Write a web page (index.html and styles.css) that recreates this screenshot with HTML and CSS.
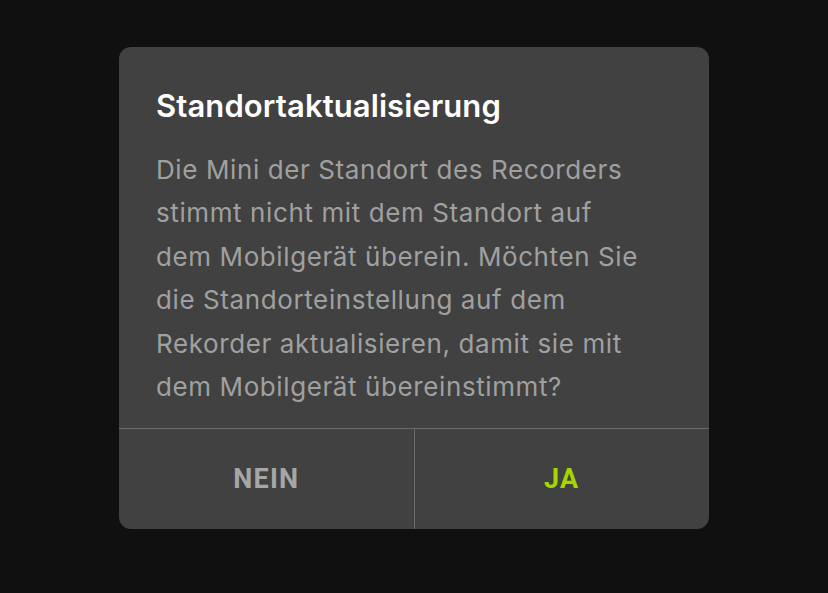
FILE: index.html
```html
<!DOCTYPE html>
<html lang="de">
<head>
  <meta charset="UTF-8">
  <title>Standortaktualisierung</title>
  <meta name="viewport" content="width=device-width, initial-scale=1.0">
  <link rel="stylesheet" href="styles.css">
</head>
<body>
  <div class="dialog" role="dialog" aria-labelledby="dlgTitle">
    <div class="dialog-body">
      <h2 id="dlgTitle">Standortaktualisierung</h2>
      <p class="message">Die Mini der Standort des Recorders<br>
        stimmt nicht mit dem Standort auf<br>
        dem Mobilgerät überein. Möchten Sie<br>
        die Standorteinstellung auf dem<br>
        Rekorder aktualisieren, damit sie mit<br>
        dem Mobilgerät übereinstimmt?</p>
    </div>
    <div class="actions">
      <button class="btn btn-no">NEIN</button>
      <button class="btn btn-yes">JA</button>
    </div>
  </div>
</body>
</html>
```

FILE: styles.css
```css
html, body {
  margin: 0;
  padding: 0;
  height: 100%;
}
body {
  background: #101010;
  font-family: Inter, 'Noto Sans', sans-serif;
  display: flex;
  justify-content: center;
  align-items: flex-start;
  padding-top: 47px;
  box-sizing: border-box;
  overflow: hidden;
}

.dialog {
  width: 590px;
  background: #414141;
  border-radius: 12px;
  overflow: hidden;
}

.dialog-body {
  padding: 40px 20px 20px 37px;
}

h2 {
  margin: 0;
  color: #ffffff;
  font-size: 31px;
  font-weight: 600;
  line-height: 38px;
  letter-spacing: 0.1px;
}

.message {
  margin: 23px 0 0 0;
  color: #a0a0a0;
  font-size: 26px;
  line-height: 43.4px;
  font-weight: 400;
  letter-spacing: 0.6px;
  white-space: nowrap;
}

.actions {
  display: flex;
  border-top: 1px solid #6b6b6b;
  height: 100px;
}
.btn {
  flex: 1;
  background: none;
  border: none;
  font-family: Roboto, 'Noto Sans', sans-serif;
  font-size: 27px;
  font-weight: 700;
  letter-spacing: 1.2px;
  cursor: pointer;
}
.btn-no {
  color: #a6a6a6;
  border-right: 1px solid #6b6b6b;
}
.btn-yes {
  color: #a5d600;
}
```
